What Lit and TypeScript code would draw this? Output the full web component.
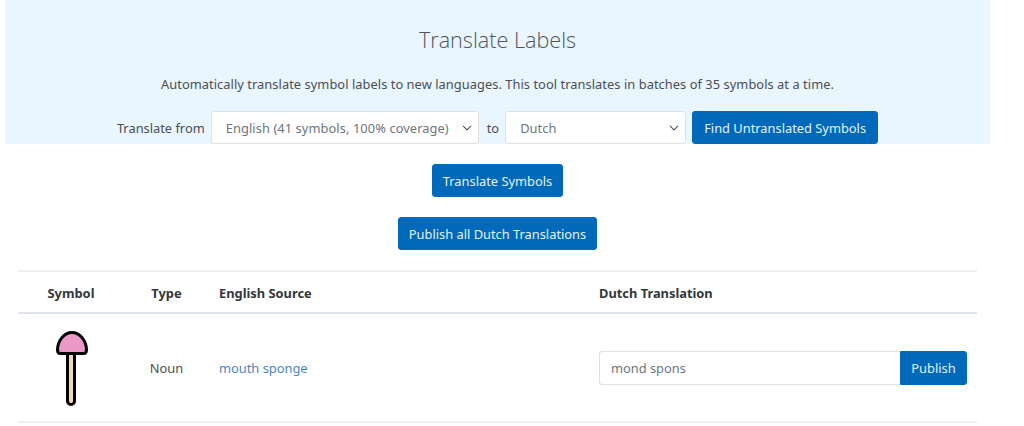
import { LitElement, html, css } from "lit";
import { customElement } from "lit/decorators.js";

@customElement("app-root")
export class AppRoot extends LitElement {
  static styles = css`
    :host {
      display: block;
      width: 985px;
      margin-left: 5px;
      font-family: "Noto Sans", "Open Sans", sans-serif;
      font-size: 12.85px;
      color: #4b4f54;
      background: #fff;
    }
    .panel {
      background: #e9f5ff;
      height: 144px;
      display: flex;
      flex-direction: column;
      align-items: center;
      box-sizing: border-box;
      padding-top: 23px;
    }
    h1 {
      margin: 0;
      font-family: "Open Sans", sans-serif;
      font-weight: 300;
      font-size: 21.6px;
      line-height: 34px;
      color: #50555a;
    }
    .intro {
      margin: 17px 0 0;
      line-height: 20px;
      letter-spacing: 0.05px;
    }
    .form {
      margin-top: 17px;
      display: flex;
      align-items: center;
      height: 33px;
    }
    .form label { white-space: nowrap; }
    select {
      appearance: none;
      box-sizing: border-box;
      height: 33px;
      font: inherit;
      letter-spacing: 0.08px;
      color: #6c757d;
      background: #fff
        url("data:image/svg+xml,%3csvg xmlns='http://www.w3.org/2000/svg' viewBox='0 0 16 16'%3e%3cpath fill='none' stroke='%23495057' stroke-linecap='round' stroke-linejoin='round' stroke-width='1.800' d='M2 5l6 6 6-6'/%3e%3c/svg%3e")
        no-repeat right 6px center / 10px 10px;
      border: 1px solid #dee2e6;
      border-radius: 3px;
      padding: 0 20px 0 14px;
      outline: none;
    }
    .from { width: 268px; margin: 0 8px 0 6px; }
    .to { width: 181px; margin: 0 6px 0 6px; }
    button {
      box-sizing: border-box;
      height: 33px;
      font: inherit;
      color: #e6f1fa;
      background: #0069ba;
      border: 1px solid #0069ba;
      border-radius: 3px;
      padding: 0 10px;
      white-space: nowrap;
    }
    .form button { width: 186px; padding: 0; }
    .actions {
      display: flex;
      flex-direction: column;
      align-items: center;
      gap: 20px;
      padding-top: 20px;
    }
    .table {
      margin: 20px 13px 0;
      display: grid;
      grid-template-columns: 106px 83px 380px 1fr;
      border-top: 2px solid #eef0f2;
      border-bottom: 2px solid #eef0f2;
    }
    .th {
      display: flex;
      align-items: center;
      font-weight: 700;
      color: #33373b;
      border-bottom: 2px solid #dfe5ea;
      box-sizing: border-box;
      height: 42px;
      padding-top: 2px;
    }
    .td {
      box-sizing: border-box;
      height: 107px;
      padding-top: 1px;
      display: flex;
      align-items: center;
    }
    .sym { justify-content: center; }
    .type { justify-content: center; padding-left: 2px; }
    .src { padding-left: 12px; }
    .dutch { padding-left: 12px; }
    a { color: #4a86c5; text-decoration: none; }
    .group { display: flex; width: 368px; height: 34px; }
    input {
      flex: 1;
      min-width: 0;
      box-sizing: border-box;
      height: 34px;
      font: inherit;
      color: #6c757d;
      border: 1px solid #dee2e6;
      border-right: 0;
      border-radius: 3px 0 0 3px;
      padding: 0 11px;
      outline: none;
      background: #fff;
    }
    .group button {
      width: 67px;
      height: 34px;
      padding: 0;
      border-radius: 0 3px 3px 0;
    }
    .icon { display: block; margin-left: 2px; }
  `;

  render() {
    return html`
      <section class="panel">
        <h1>Translate Labels</h1>
        <p class="intro">Automatically translate symbol labels to new languages. This tool translates in batches of 35 symbols at a time.</p>
        <div class="form">
          <label>Translate from</label>
          <select class="from"><option>English (41 symbols, 100% coverage)</option></select>
          <label>to</label>
          <select class="to"><option>Dutch</option></select>
          <button>Find Untranslated Symbols</button>
        </div>
      </section>
      <div class="actions">
        <button>Translate Symbols</button>
        <button>Publish all Dutch Translations</button>
      </div>
      <div class="table">
        <div class="th sym">Symbol</div>
        <div class="th type">Type</div>
        <div class="th src">English Source</div>
        <div class="th dutch">Dutch Translation</div>
        <div class="td sym">
          <svg class="icon" width="32" height="75" viewBox="0 0 32 75">
            <path d="M11.500 22h7v48a3.500 3.500 0 0 1-7 0z" fill="#ecd9ae" stroke="#000" stroke-width="3" stroke-linejoin="round"/>
            <path d="M1.500 19c0-9 6.500-17.500 14.500-17.500S30.500 10 30.500 19c0 2-1 3.500-3 3.500h-23c-2 0-3-1.500-3-3.500z" fill="#ea99c6" stroke="#000" stroke-width="3" stroke-linejoin="round"/>
          </svg>
        </div>
        <div class="td type">Noun</div>
        <div class="td src"><a href="#">mouth sponge</a></div>
        <div class="td dutch">
          <div class="group">
            <input type="text" .value=${"mond spons"} />
            <button>Publish</button>
          </div>
        </div>
      </div>
    `;
  }
}
